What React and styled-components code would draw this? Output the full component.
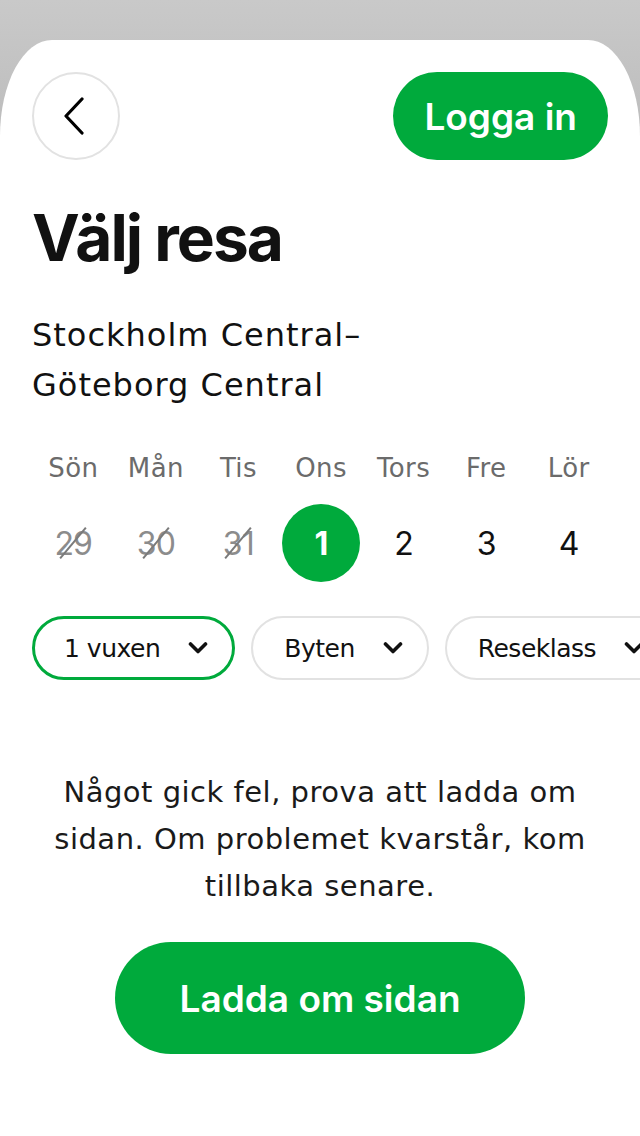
import React from 'react'
import styled, { createGlobalStyle } from 'styled-components'

const GlobalStyle = createGlobalStyle`
  html, body {
    margin: 0;
    padding: 0;
  }
  body {
    background: linear-gradient(#c9c9c9 0px, #bcbcbc 140px, #bcbcbc 100%);
    font-family: 'DejaVu Sans', 'Liberation Sans', sans-serif;
    color: #111;
  }
`

const Sheet = styled.div`
  margin-top: 40px;
  min-height: 1096px;
  background: #ffffff;
  border-radius: 52px 52px 0 0 / 96px 96px 0 0;
  overflow: hidden;
  box-sizing: border-box;
  padding: 32px 0 0 32px;
`

const Header = styled.div`
  display: flex;
  justify-content: space-between;
  align-items: center;
  padding-right: 32px;
`

const BackButton = styled.button`
  width: 88px;
  height: 88px;
  border-radius: 50%;
  border: 2px solid #e2e2e2;
  background: #fff;
  display: flex;
  align-items: center;
  justify-content: center;
  padding: 0;
  box-sizing: border-box;
`

const GreenButton = styled.button`
  background: #00aa3c;
  color: #fff;
  border: none;
  font-family: 'Inter', sans-serif;
  font-weight: 600;
  font-size: ${(p) => p.$size}px;
  height: ${(p) => p.$height}px;
  border-radius: ${(p) => p.$height / 2}px;
  padding: 0 ${(p) => p.$pad}px;
  width: ${(p) => (p.$width ? `${p.$width}px` : 'auto')};
`

const Title = styled.h1`
  margin: 38px 0 0;
  font-family: 'Inter', sans-serif;
  font-size: 64px;
  line-height: 80px;
  font-weight: 700;
  letter-spacing: -2px;
`

const Route = styled.p`
  margin: 32px 0 0;
  font-size: 32px;
  line-height: 50px;
  font-weight: 400;
  letter-spacing: 1px;
`

const Week = styled.div`
  display: grid;
  grid-template-columns: repeat(7, 1fr);
  width: 578px;
  margin-top: 38px;
`

const DayName = styled.div`
  text-align: center;
  font-size: 26px;
  line-height: 40px;
  color: #6b6b6b;
  letter-spacing: 0.4px;
`

const DateCell = styled.div`
  display: flex;
  justify-content: center;
  align-items: center;
  height: 80px;
  margin-top: 15px;
`

const DateNum = styled.span`
  position: relative;
  display: flex;
  align-items: center;
  justify-content: center;
  font-size: 32px;
  width: ${(p) => (p.$active ? '78px' : 'auto')};
  height: ${(p) => (p.$active ? '78px' : 'auto')};
  border-radius: 50%;
  background: ${(p) => (p.$active ? '#00aa3c' : 'transparent')};
  color: ${(p) => (p.$active ? '#fff' : p.$past ? '#8c8c8c' : '#111')};
  font-family: 'Inter', sans-serif;
  font-weight: ${(p) => (p.$active ? 700 : 400)};
  letter-spacing: -0.8px;

  ${(p) =>
    p.$past &&
    `
    &::after {
      content: '';
      position: absolute;
      left: 50%;
      top: 50%;
      width: 40px;
      height: 2px;
      background: #7a7a7a;
      transform: translate(-50%, -50%) rotate(-50deg);
    }
  `}
`

const Filters = styled.div`
  display: flex;
  gap: 16px;
  margin-top: 33px;
  white-space: nowrap;
`

const Chip = styled.div`
  flex: none;
  display: flex;
  align-items: center;
  gap: 28px;
  height: 64px;
  box-sizing: border-box;
  padding: 0 24px 0 ${(p) => (p.$selected ? 29 : 31)}px;
  border-radius: 32px;
  border: ${(p) => (p.$selected ? '3px solid #00aa3c' : '2px solid #e2e2e2')};
  font-size: 25px;
  letter-spacing: -0.5px;
  color: #111;
`

const Message = styled.p`
  margin: 89px 32px 0 0;
  text-align: center;
  font-size: 29px;
  line-height: 47px;
  letter-spacing: 0.5px;
  color: #1a1a1a;
`

const Center = styled.div`
  display: flex;
  justify-content: center;
  padding-right: 32px;
  margin-top: 32px;
`

const ChevronLeft = () => (
  <svg width="24" height="40" viewBox="0 0 24 40">
    <path d="M18 3 L2 20 L18 37" fill="none" stroke="#000" strokeWidth="3.2" strokeLinecap="round" strokeLinejoin="round" />
  </svg>
)

const ChevronDown = () => (
  <svg width="20" height="14" viewBox="0 0 20 14">
    <path d="M2.5 3 L10 10.5 L17.5 3" fill="none" stroke="#111" strokeWidth="3.6" strokeLinecap="round" strokeLinejoin="round" />
  </svg>
)

const days = ['Sön', 'Mån', 'Tis', 'Ons', 'Tors', 'Fre', 'Lör']
const dates = [
  { n: 29, past: true },
  { n: 30, past: true },
  { n: 31, past: true },
  { n: 1, active: true },
  { n: 2 },
  { n: 3 },
  { n: 4 },
]

export default function App() {
  return (
    <>
      <GlobalStyle />
      <Sheet>
        <Header>
          <BackButton aria-label="Tillbaka">
            <ChevronLeft />
          </BackButton>
          <GreenButton $size={37} $height={88} $pad={31}>
            Logga in
          </GreenButton>
        </Header>

        <Title>Välj resa</Title>
        <Route>
          Stockholm Central–
          <br />
          Göteborg Central
        </Route>

        <Week>
          {days.map((d) => (
            <DayName key={d}>{d}</DayName>
          ))}
          {dates.map((d) => (
            <DateCell key={d.n}>
              <DateNum $past={d.past} $active={d.active}>
                {d.n}
              </DateNum>
            </DateCell>
          ))}
        </Week>

        <Filters>
          <Chip $selected>
            1 vuxen <ChevronDown />
          </Chip>
          <Chip>
            Byten <ChevronDown />
          </Chip>
          <Chip>
            Reseklass <ChevronDown />
          </Chip>
        </Filters>

        <Message>
          Något gick fel, prova att ladda om
          <br />
          sidan. Om problemet kvarstår, kom
          <br />
          tillbaka senare.
        </Message>

        <Center>
          <GreenButton $size={37} $height={112} $pad={0} $width={410}>
            Ladda om sidan
          </GreenButton>
        </Center>
      </Sheet>
    </>
  )
}
